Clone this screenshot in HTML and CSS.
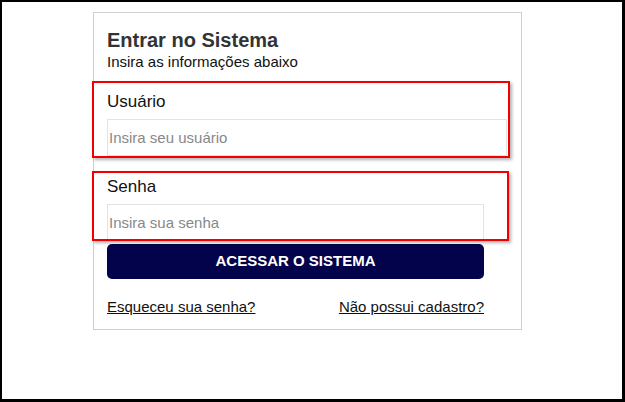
FILE: index.html
```html
<!DOCTYPE html>
<html>
<head>
<meta charset="utf-8">
<title>Entrar no Sistema</title>
<link rel="stylesheet" href="styles.css">
</head>
<body>
<div class="frame">
  <div class="card">
    <h1 class="title">Entrar no Sistema</h1>
    <p class="subtitle">Insira as informações abaixo</p>

    <form class="login" action="" method="post">
      <label class="field-label" for="usuario">Usuário</label>
      <input class="field field-wide" type="text" id="usuario" name="usuario" placeholder="Insira seu usuário">

      <label class="field-label field-label-2" for="senha">Senha</label>
      <input class="field" type="password" id="senha" name="senha" placeholder="Insira sua senha">

      <button class="submit" type="button">ACESSAR O SISTEMA</button>

      <div class="links">
        <a href="#">Esqueceu sua senha?</a>
        <a href="#">Não possui cadastro?</a>
      </div>
    </form>
  </div>

  <!-- marcações em vermelho -->
  <div class="mark mark-user"></div>
  <div class="mark mark-pass"></div>
</div>
</body>
</html>
```

FILE: styles.css
```css
html, body {
    margin: 0;
    padding: 0;
    background: #fff;
}
body {
    font-family: "Liberation Sans", Arial, Helvetica, sans-serif;
    color: #111;
}
.frame {
    position: relative;
    box-sizing: border-box;
    width: 625px;
    height: 402px;
    border-style: solid;
    border-color: #000;
    border-width: 2px 3px 3px 2px;
    padding: 10px 0 0 91px;
}
.card {
    box-sizing: border-box;
    width: 429px;
    height: 318px;
    border: 1px solid #cfcfcf;
    padding: 15px 0 0 13px;
}
.title {
    margin: 0;
    font-size: 20px;
    line-height: 24px;
    font-weight: bold;
    color: #333;
}
.subtitle {
    margin: 1px 0 0 0;
    font-size: 15px;
    line-height: 18px;
}
.login {
    display: flex;
    flex-direction: column;
    align-items: flex-start;
    margin: 20px 0 0 0;
}
.field-label {
    font-size: 17px;
    line-height: 22px;
    color: #111;
    margin-bottom: 6px;
}
.field-label-2 {
    margin-top: 20px;
}
.field {
    box-sizing: border-box;
    width: 377px;
    height: 37px;
    margin: 0;
    border: 1px solid #e3e3e3;
    padding: 0 1px;
    font-family: "Liberation Sans", Arial, Helvetica, sans-serif;
    font-size: 15px;
    color: #333;
    background: #fff;
    outline: none;
}
.field-wide {
    width: 400px;
}
.field::placeholder {
    color: #888;
}
.submit {
    box-sizing: border-box;
    width: 377px;
    height: 35px;
    margin-top: 3px;
    padding: 0 0 2px 0;
    border: none;
    border-radius: 5px;
    background: #03034b;
    color: #fff;
    font-family: "Liberation Sans", Arial, Helvetica, sans-serif;
    font-size: 15px;
    font-weight: bold;
}
.links {
    display: flex;
    justify-content: space-between;
    width: 377px;
    margin-top: 19px;
    font-size: 15px;
    line-height: 18px;
}
.links a {
    color: #111;
    text-decoration: underline;
}
.mark {
    position: absolute;
    box-sizing: border-box;
    border: 2px solid #f00000;
    box-shadow: 2px 2px 3px rgba(0, 0, 0, 0.3);
}
.mark-user {
    left: 90px;
    top: 79px;
    width: 418px;
    height: 77px;
}
.mark-pass {
    left: 90px;
    top: 169px;
    width: 417px;
    height: 70px;
}
```
